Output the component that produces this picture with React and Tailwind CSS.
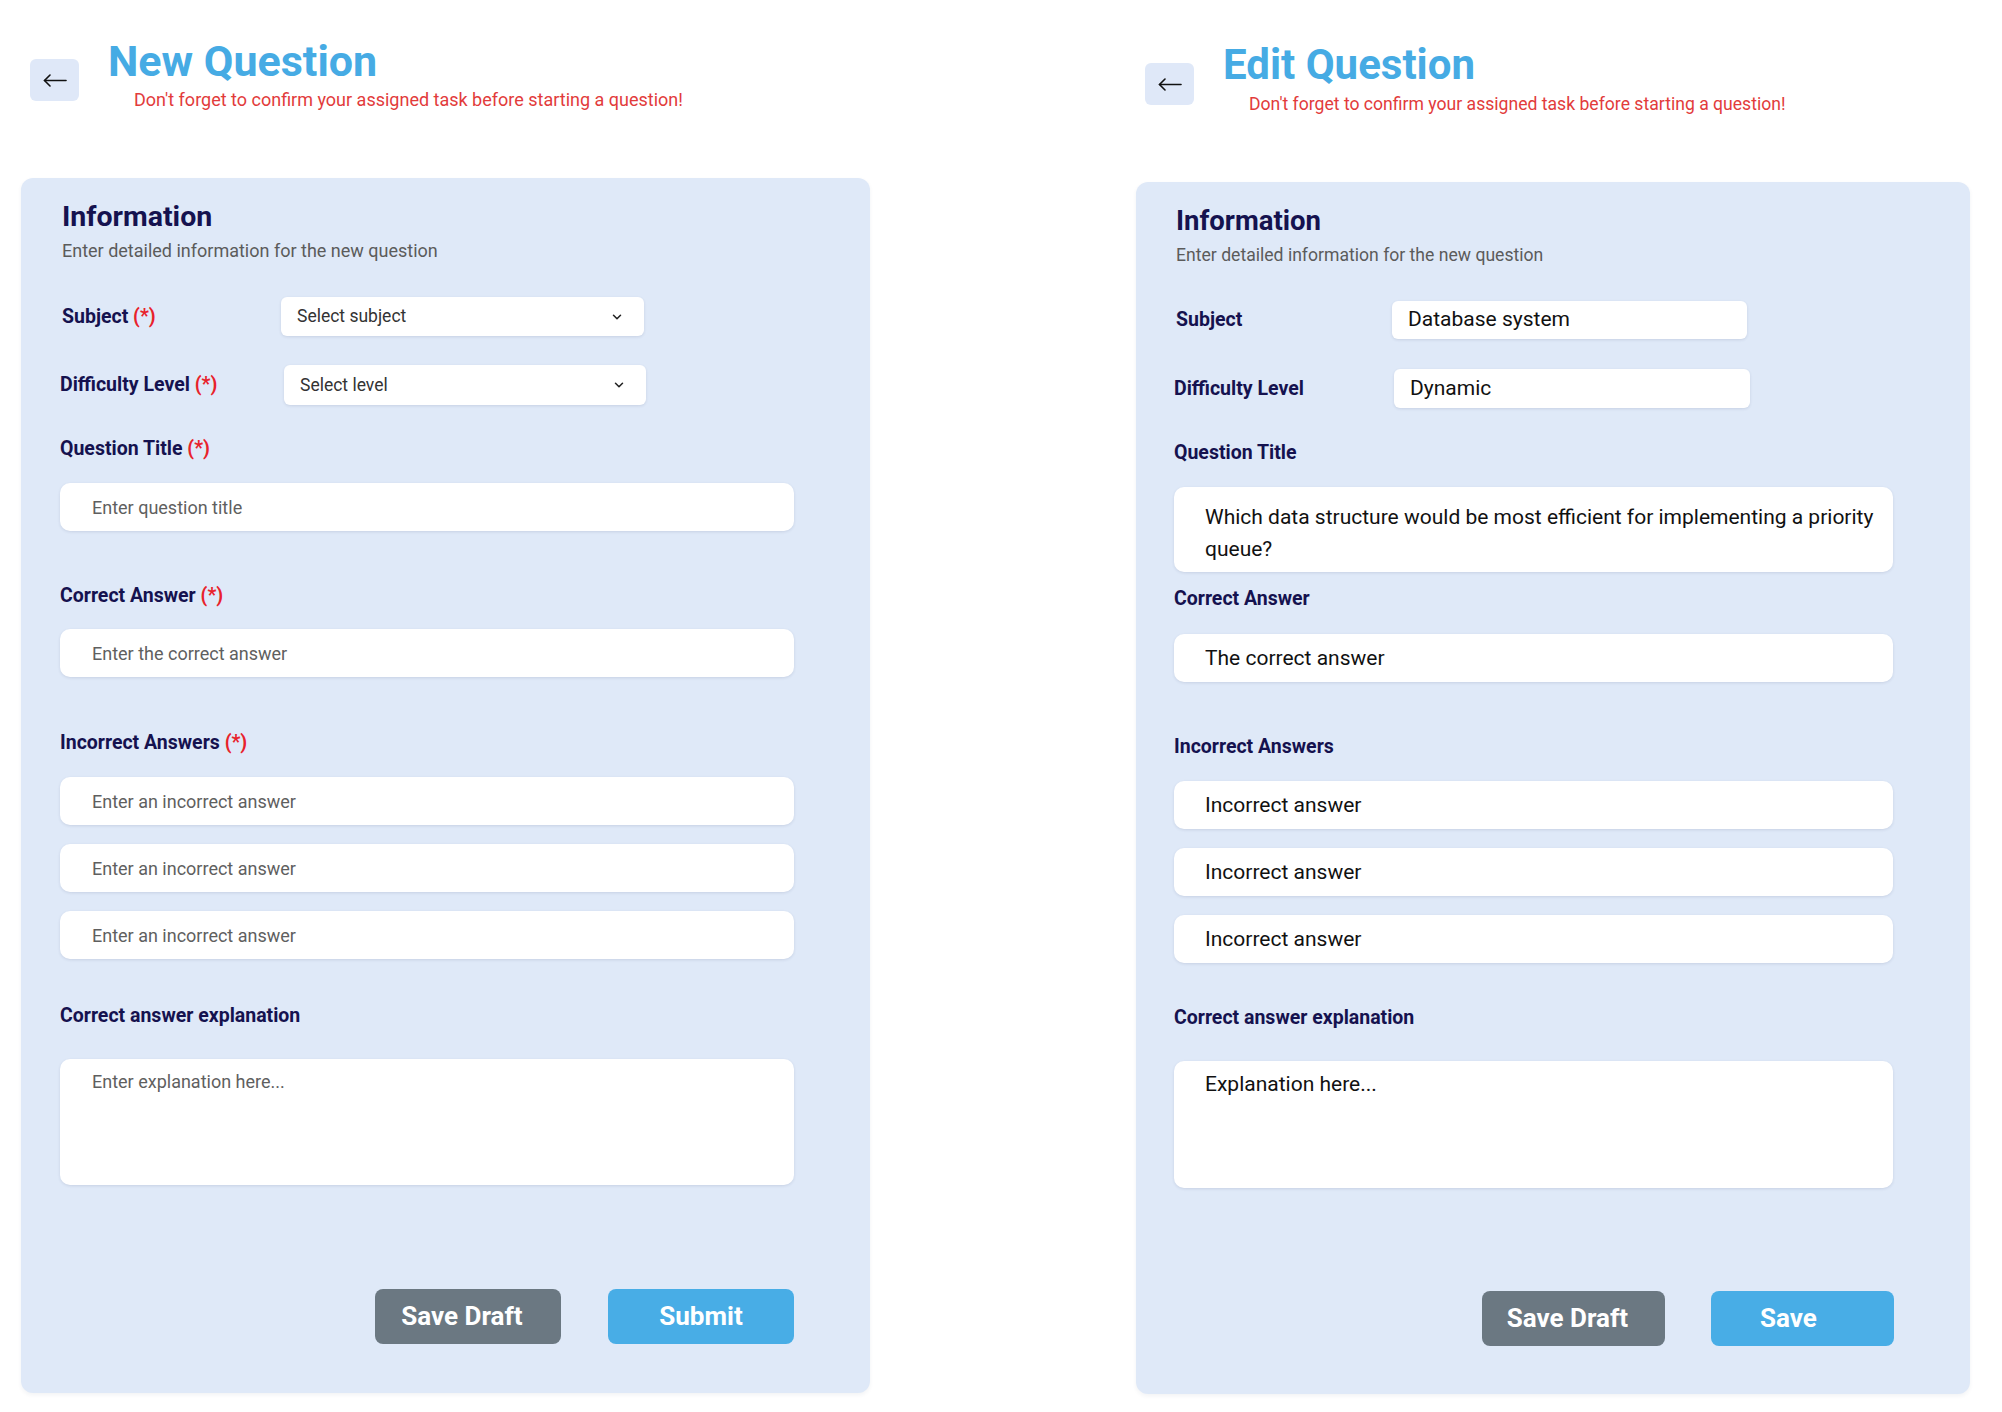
import { ChevronDown } from "lucide-react";

const navy = "text-[#15124f]";

function BackArrow() {
  return (
    <svg width="24" height="13" viewBox="0 0 24 13" fill="none" stroke="#111" strokeWidth="1.6" strokeLinecap="round" strokeLinejoin="round">
      <path d="M23 6.5H1.5" />
      <path d="M7 1L1.5 6.5L7 12" />
    </svg>
  );
}

function Header({ title, titleSize, noteSize }) {
  return (
    <div className="flex items-start pl-[9px] pt-[40px]">
      <button className="mt-[19px] flex h-[42px] w-[49px] items-center justify-center rounded-md bg-[#dfe8f8]">
        <BackArrow />
      </button>
      <div className="ml-[29px]">
        <h1 className={`${titleSize} font-bold leading-[42px] text-[#46abe4]`}>{title}</h1>
        <p className={`ml-[26px] mt-2 ${noteSize} leading-[20px] text-[#e23b3b]`}>
          Don't forget to confirm your assigned task before starting a question!
        </p>
      </div>
    </div>
  );
}

function Label({ children, req, className = "" }) {
  return (
    <label className={`block text-[19.5px] font-bold leading-[24px] ${navy} ${className}`}>
      {children}
      {req && <span className="text-[#e8222b]"> (*)</span>}
    </label>
  );
}

const boxCls =
  "rounded-[10px] bg-white shadow-[0_1px_3px_rgba(30,50,90,0.12)] outline-none";

function TextBox({ placeholder, value, className = "" }) {
  return (
    <input
      className={`${boxCls} block h-12 pr-3 ${className}`}
      placeholder={placeholder}
      defaultValue={value}
      readOnly={value !== undefined}
    />
  );
}

function SelectBox({ text, className = "" }) {
  return (
    <div
      className={`flex items-center justify-between rounded-md bg-white pl-4 pr-5 text-[17.5px] text-[#333] shadow-[0_1px_3px_rgba(30,50,90,0.12)] ${className}`}
    >
      <span>{text}</span>
      <ChevronDown size={14} strokeWidth={2.6} className="text-[#222]" />
    </div>
  );
}

function InfoHead({ headSize, descSize }) {
  return (
    <>
      <h2 className={`ml-[2px] ${headSize} font-bold leading-[32px] ${navy}`}>Information</h2>
      <p className={`ml-[2px] mt-2 ${descSize} leading-[20px] text-[#5b5b5b]`}>
        Enter detailed information for the new question
      </p>
    </>
  );
}

const empty = "w-[734px] pl-8 text-[18px] placeholder:text-[#5f5f5f]";

function NewQuestion() {
  return (
    <div className="ml-[21px] w-[849px]">
      <Header title="New Question" titleSize="text-[43px]" noteSize="text-[18px]" />
      <section className="mt-[68px] rounded-xl bg-[#dfe9f8] pb-[49px] pl-[39px] pt-[23px] shadow-[0_2px_4px_rgba(30,50,90,0.06)]">
        <InfoHead headSize="text-[28.5px]" descSize="text-[18px]" />
        <div className="mt-9 flex items-center">
          <Label req className="ml-[2px] w-[219px]">Subject</Label>
          <SelectBox text="Select subject" className="h-[39px] w-[363px]" />
        </div>
        <div className="mt-[29px] flex items-center">
          <Label req className="w-[224px]">Difficulty Level</Label>
          <SelectBox text="Select level" className="h-10 w-[362px]" />
        </div>
        <Label req className="mt-8">Question Title</Label>
        <TextBox placeholder="Enter question title" className={`mt-[22px] ${empty}`} />
        <Label req className="mt-[53px]">Correct Answer</Label>
        <TextBox placeholder="Enter the correct answer" className={`mt-[21px] ${empty}`} />
        <Label req className="mt-[54px]">Incorrect Answers</Label>
        <div className="mt-[22px] flex flex-col gap-[19px]">
          <TextBox placeholder="Enter an incorrect answer" className={empty} />
          <TextBox placeholder="Enter an incorrect answer" className={empty} />
          <TextBox placeholder="Enter an incorrect answer" className={empty} />
        </div>
        <Label className="mt-[45px]">Correct answer explanation</Label>
        <textarea
          className={`${boxCls} mt-[31px] block h-[126px] w-[734px] resize-none pl-8 pr-3 pt-[10px] text-[18px] leading-[26px] placeholder:text-[#5f5f5f]`}
          placeholder="Enter explanation here..."
        />
        <div className="mt-[104px] flex w-[734px] justify-end gap-[47px]">
          <button className="h-[55px] w-[186px] rounded-lg bg-[#6b7882] pr-3 text-[26px] font-bold text-white">
            Save Draft
          </button>
          <button className="h-[55px] w-[186px] rounded-lg bg-[#48ade6] text-[26px] font-bold text-white">
            Submit
          </button>
        </div>
      </section>
    </div>
  );
}

const filled = "w-[719px] pl-[31px] text-[21px] text-[#111]";

function EditQuestion() {
  return (
    <div className="ml-[266px] mt-1 w-[834px]">
      <Header title="Edit Question" titleSize="text-[42px]" noteSize="text-[17.6px]" />
      <section className="mt-[68px] rounded-xl bg-[#dfe9f8] pb-[48px] pl-[38px] pt-[23px] shadow-[0_2px_4px_rgba(30,50,90,0.06)]">
        <InfoHead headSize="text-[27.5px]" descSize="text-[17.6px]" />
        <div className="mt-9 flex items-center">
          <Label className="ml-[2px] w-[216px]">Subject</Label>
          <div className="flex h-[38px] w-[355px] items-center rounded-md bg-white pl-4 text-[21px] text-[#111] shadow-[0_1px_3px_rgba(30,50,90,0.12)]">
            Database system
          </div>
        </div>
        <div className="mt-[30px] flex items-center">
          <Label className="w-[220px]">Difficulty Level</Label>
          <div className="flex h-[39px] w-[356px] items-center rounded-md bg-white pl-4 text-[21px] text-[#111] shadow-[0_1px_3px_rgba(30,50,90,0.12)]">
            Dynamic
          </div>
        </div>
        <Label className="mt-[33px]">Question Title</Label>
        <textarea
          className={`${boxCls} mt-[22px] block h-[85px] w-[719px] resize-none pl-[31px] pr-1 pt-[14px] text-[21px] leading-[32px] text-[#111]`}
          defaultValue="Which data structure would be most efficient for implementing a priority queue?"
          readOnly
        />
        <Label className="mt-[15px]">Correct Answer</Label>
        <TextBox value="The correct answer" className={`mt-[23px] ${filled}`} />
        <Label className="mt-[53px]">Incorrect Answers</Label>
        <div className="mt-[22px] flex flex-col gap-[19px]">
          <TextBox value="Incorrect answer" className={filled} />
          <TextBox value="Incorrect answer" className={filled} />
          <TextBox value="Incorrect answer" className={filled} />
        </div>
        <Label className="mt-[43px]">Correct answer explanation</Label>
        <textarea
          className={`${boxCls} mt-[31px] block h-[127px] w-[719px] resize-none pl-[31px] pr-3 pt-[9px] text-[21px] leading-[28px] text-[#111]`}
          defaultValue="Explanation here..."
          readOnly
        />
        <div className="mt-[103px] flex w-[720px] justify-end gap-[46px]">
          <button className="h-[55px] w-[183px] rounded-lg bg-[#6b7882] pr-3 text-[26px] font-bold text-white">
            Save Draft
          </button>
          <button className="h-[55px] w-[183px] rounded-lg bg-[#48ade6] pr-7 text-[26px] font-bold text-white">
            Save
          </button>
        </div>
      </section>
    </div>
  );
}

export default function App() {
  return (
    <div className="flex min-h-screen items-start bg-white font-['Roboto',sans-serif]">
      <NewQuestion />
      <EditQuestion />
    </div>
  );
}
